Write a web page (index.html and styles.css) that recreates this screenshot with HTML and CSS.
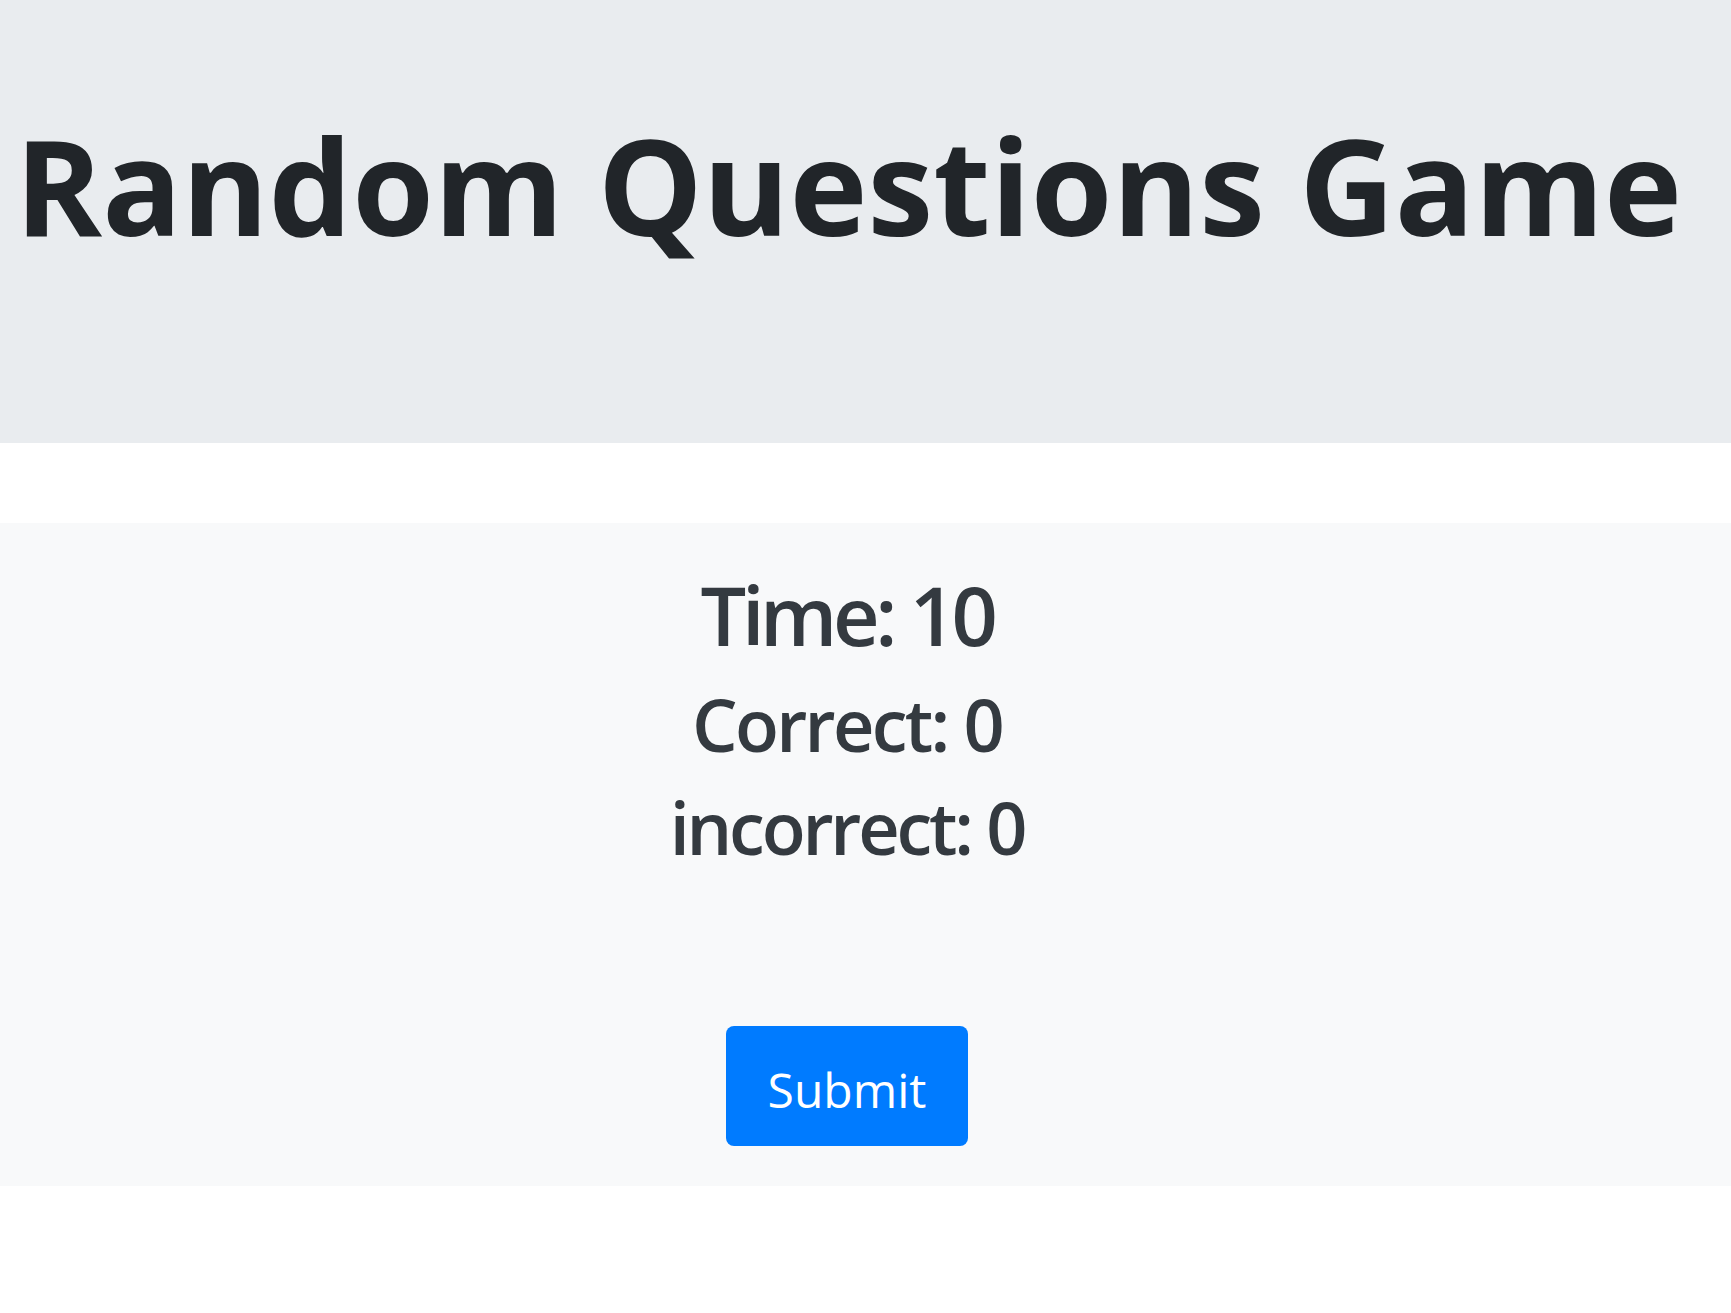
FILE: index.html
```html
<!DOCTYPE html>
<html lang="en">
<head>
<meta charset="utf-8">
<title>Random Questions Game</title>
<link rel="stylesheet" href="styles.css">
</head>
<body>
<header class="jumbo">
  <h1 class="title">Random Questions Game</h1>
</header>
<main class="panel">
  <div class="stats">
    <div class="stat stat-time">Time: 10</div>
    <div class="stat stat-correct">Correct: 0</div>
    <div class="stat stat-incorrect">incorrect: 0</div>
  </div>
  <button class="btn" type="button">Submit</button>
</main>
</body>
</html>
```
FILE: styles.css
```css
html, body {
  margin: 0;
  padding: 0;
  background: #ffffff;
  font-family: "Open Sans", "Noto Sans", sans-serif;
}
.jumbo {
  background: #e9ecef;
  height: 443px;
  box-sizing: border-box;
  padding: 95px 0 0 15px;
  margin-bottom: 80px;
}
.title {
  margin: 0;
  font-size: 132px;
  line-height: 180px;
  font-weight: 700;
  color: #212529;
  white-space: nowrap;
}
.panel {
  background: #f8f9fa;
  height: 663px;
  box-sizing: border-box;
  padding: 40px 37px 0 0;
  display: flex;
  flex-direction: column;
  align-items: center;
}
.stats {
  display: flex;
  flex-direction: column;
  align-items: center;
  color: #343a40;
  font-weight: 600;
}
.stat {
  font-size: 72px;
  line-height: 103px;
}
.stat-time {
  font-size: 81px;
  letter-spacing: -4.4px;
  margin-bottom: 7px;
}
.stat-correct {
  letter-spacing: -2.7px;
}
.stat-incorrect {
  letter-spacing: -3.2px;
}
.btn {
  margin-top: 147px;
  width: 242px;
  height: 120px;
  background: #007bff;
  color: #ffffff;
  border: none;
  border-radius: 8px;
  font-family: inherit;
  font-size: 48px;
  padding: 6px 0 0 0;
}
```
